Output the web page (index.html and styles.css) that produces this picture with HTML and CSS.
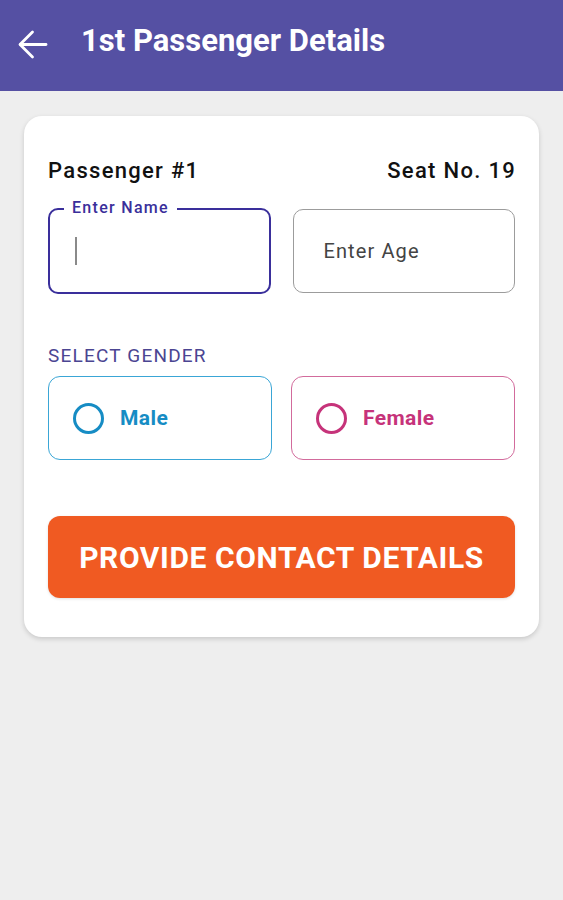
FILE: index.html
```html
<!DOCTYPE html>
<html lang="en">
<head>
<meta charset="utf-8">
<title>1st Passenger Details</title>
<link rel="stylesheet" href="styles.css">
</head>
<body>
<header class="appbar">
  <button class="back" aria-label="Back">
    <svg width="32" height="30" viewBox="0 0 32 30" fill="none" stroke="#ffffff" stroke-width="2.8" stroke-linecap="round" stroke-linejoin="round">
      <path d="M29 15.5H3.5"/>
      <path d="M15.5 3L3 15.5 15.5 28"/>
    </svg>
  </button>
  <h1 class="title">1st Passenger Details</h1>
</header>
<main class="content">
  <section class="card">
    <div class="card-head">
      <span class="pname">Passenger #1</span>
      <span class="seat">Seat No. 19</span>
    </div>
    <div class="fields">
      <div class="field field-focus">
        <span class="float-label">Enter Name</span>
        <span class="cursor"></span>
      </div>
      <div class="field field-idle">
        <span class="placeholder">Enter Age</span>
      </div>
    </div>
    <div class="gender-label">SELECT GENDER</div>
    <div class="genders">
      <div class="gender gender-male">
        <span class="radio"></span>
        <span class="gender-text">Male</span>
      </div>
      <div class="gender gender-female">
        <span class="radio"></span>
        <span class="gender-text">Female</span>
      </div>
    </div>
    <button class="cta">PROVIDE CONTACT DETAILS</button>
  </section>
</main>
</body>
</html>
```
FILE: styles.css
```css
* { box-sizing: border-box; }
html, body { margin: 0; padding: 0; }
body {
  background: #eeeeee;
  font-family: Roboto, "Noto Sans", "Liberation Sans", sans-serif;
  width: 563px;
  height: 900px;
  overflow: hidden;
}
.appbar {
  height: 91px;
  background: #5550a3;
  display: flex;
  align-items: center;
  padding: 0 0 10px 17px;
}
.back {
  background: none;
  border: 0;
  padding: 0;
  width: 32px;
  height: 30px;
  display: flex;
  margin-top: 7px;
}
.title {
  margin: 0 0 0 32px;
  color: #ffffff;
  font-size: 31px;
  font-weight: 700;
  line-height: 36px;
  letter-spacing: 0;
}
.content {
  padding: 25px 24px 0 24px;
}
.card {
  background: #ffffff;
  border-radius: 18px;
  box-shadow: 0 2px 5px rgba(0,0,0,0.16);
  padding: 42px 24px 39px 24px;
}
.card-head {
  display: flex;
  justify-content: space-between;
  font-size: 22px;
  font-weight: 500;
  line-height: 25px;
  letter-spacing: 1.3px;
  color: #111111;
}
.seat { margin-right: -1px; }
.fields {
  display: grid;
  grid-template-columns: 1fr 1fr;
  gap: 22px;
  margin-top: 25px;
}
.field {
  position: relative;
  height: 86px;
  border-radius: 10px;
  display: flex;
  align-items: center;
}
.field-focus {
  border: 2px solid #3a2f9b;
  padding-left: 25px;
}
.field-idle {
  border: 1px solid #9c9c9c;
  padding-left: 30px;
  height: 84px;
  margin-top: 1px;
}
.float-label {
  position: absolute;
  top: -12px;
  left: 14px;
  background: #ffffff;
  padding: 0 8px;
  font-size: 16px;
  font-weight: 500;
  line-height: 20px;
  letter-spacing: 1.3px;
  color: #3a2f9b;
}
.cursor {
  width: 2px;
  height: 28px;
  background: #8a8a8a;
}
.placeholder {
  font-size: 20px;
  letter-spacing: 1.1px;
  color: #444444;
}
.gender-label {
  margin-top: 50px;
  font-size: 19px;
  line-height: 23px;
  letter-spacing: 1.2px;
  color: #4b4592;
}
.genders {
  display: grid;
  grid-template-columns: 1fr 1fr;
  gap: 19px;
  margin-top: 9px;
}
.gender {
  height: 84px;
  border-radius: 12px;
  display: flex;
  align-items: center;
  padding-left: 24px;
  gap: 16px;
}
.radio {
  width: 31px;
  height: 31px;
  border-radius: 50%;
  border: 3px solid currentColor;
  flex: none;
}
.gender-text {
  font-size: 21px;
  font-weight: 700;
  letter-spacing: 0.4px;
}
.gender-male {
  border: 1.5px solid #3aa6d6;
  color: #168cc4;
}
.gender-female {
  border: 1.5px solid #d26b9c;
  color: #c6337a;
}
.cta {
  display: block;
  width: 100%;
  margin-top: 56px;
  height: 82px;
  border: 0;
  border-radius: 12px;
  background: #f05a22;
  color: #ffffff;
  font-family: inherit;
  font-size: 30px;
  font-weight: 700;
  letter-spacing: 0.6px;
  box-shadow: 0 1px 3px rgba(0,0,0,0.12);
}
```
